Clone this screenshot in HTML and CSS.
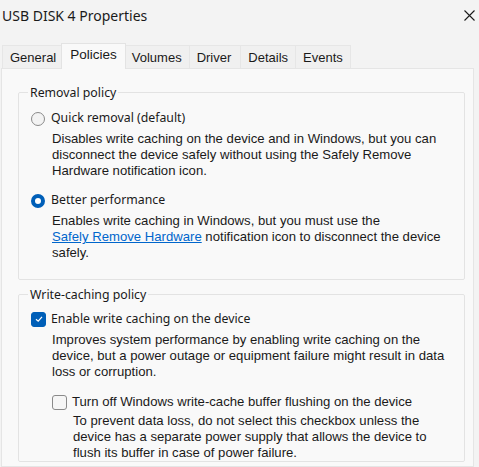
FILE: index.html
```html
<!DOCTYPE html>
<html>
<head>
<meta charset="utf-8">
<link rel="stylesheet" href="styles.css">
</head>
<body>
<div class="window">
  <div class="titlebar">
    <span class="title">USB DISK 4 Properties</span>
    <svg class="close" width="11" height="11" viewBox="0 0 11 11"><path d="M0.5 0.5 L10.5 10.5 M10.5 0.5 L0.5 10.5" stroke="#1a1a1a" stroke-width="1.1" fill="none"/></svg>
  </div>
  <div class="tabs">
    <div class="tab">General</div>
    <div class="tab active">Policies</div>
    <div class="tab">Volumes</div>
    <div class="tab tab-driver">Driver</div>
    <div class="tab">Details</div>
    <div class="tab">Events</div>
  </div>
  <div class="panel">
    <fieldset class="group group-removal">
      <legend>Removal policy</legend>
      <div class="opt">
        <span class="radio"></span>
        <span class="label">Quick removal (default)</span>
        <p class="desc">Disables write caching on the device and in Windows, but you can disconnect the device safely without using the Safely Remove Hardware notification icon.</p>
      </div>
      <div class="opt">
        <span class="radio checked"></span>
        <span class="label">Better performance</span>
        <p class="desc">Enables write caching in Windows, but you must use the<br><a class="link">Safely Remove Hardware</a> notification icon to disconnect the device safely.</p>
      </div>
    </fieldset>
    <fieldset class="group group-cache">
      <legend>Write-caching policy</legend>
      <div class="opt opt-check">
        <span class="check checked"><svg width="10" height="10" viewBox="0 0 10 10"><path d="M2 5.2 L4.2 7.2 L8 2.8" stroke="#fff" stroke-width="1.2" fill="none"/></svg></span>
        <span class="label">Enable write caching on the device</span>
        <p class="desc">Improves system performance by enabling write caching on the device, but a power outage or equipment failure might result in data loss or corruption.</p>
      </div>
      <div class="opt opt-check sub">
        <span class="check"></span>
        <span class="label plain">Turn off Windows write-cache buffer flushing on the device</span>
        <p class="desc">To prevent data loss, do not select this checkbox unless the device has a separate power supply that allows the device to flush its buffer in case of power failure.</p>
      </div>
    </fieldset>
  </div>
</div>
</body>
</html>
```
FILE: styles.css
```css
html, body {
  margin: 0;
  padding: 0;
}
body {
  width: 479px;
  height: 467px;
  overflow: hidden;
  background: #f3f3f3;
  font-family: "Liberation Sans", Arial, sans-serif;
  color: #1a1a1a;
}
.window {
  display: flex;
  flex-direction: column;
  height: 467px;
}
.titlebar {
  height: 32px;
  display: flex;
  align-items: center;
  justify-content: space-between;
  padding: 0 4px 0 2px;
}
.title {
  font-family: "Noto Sans", sans-serif;
  font-size: 14px;
  color: #1a1a1a;
  margin-top: -2px;
}
.close {
  margin-top: -2px;
}
.tabs {
  display: flex;
  align-items: flex-end;
  height: 25px;
  margin-top: 11px;
  padding-left: 2px;
}
.tab {
  height: 23px;
  box-sizing: border-box;
  padding: 0 7px;
  font-size: 13px;
  line-height: 23px;
  background: #f0f0f0;
  border: 1px solid #e6e6e6;
  border-bottom: none;
  color: #1a1a1a;
  margin-right: -1px;
}
.tab.tab-driver {
  padding: 0 9px 0 7px;
}
.tab.active {
  height: 26px;
  line-height: 22px;
  background: #f9f9f9;
  border-color: #e3e3e3;
  padding: 0 8px;
  margin: 0 0 -1px -2px;
  position: relative;
  z-index: 1;
  font-size: 13.5px;
}
.tab.active + .tab {
  margin-left: -2px;
}
.panel {
  flex: 1;
  background: #f9f9f9;
  border: 1px solid #e5e5e5;
  margin: 0 5px 0 1px;
  padding: 15px 8px 0 16px;
  display: flex;
  flex-direction: column;
  gap: 6px;
}
.group {
  margin: 0;
  border: 1px solid #e3e3e3;
  border-radius: 2px;
  padding: 7px 0 0 12px;
  min-width: 0;
}
.group legend {
  font-family: "Noto Sans", sans-serif;
  font-size: 12.3px;
  line-height: 16px;
  padding: 1px 2px 0 2px;
  margin-left: -3px;
  color: #1a1a1a;
}
.group-removal {
  padding-bottom: 18px;
}
.group-cache {
  padding-top: 6px;
}
.opt {
  display: grid;
  grid-template-columns: 14px 1fr;
  column-gap: 6px;
  align-items: center;
  margin-bottom: 11px;
}
.opt-check {
  grid-template-columns: 15px 1fr;
  column-gap: 5px;
  margin-bottom: 12px;
}
.opt:last-child {
  margin-bottom: 0;
}
.label {
  font-family: "Noto Sans", sans-serif;
  font-size: 12.3px;
  line-height: 20px;
}
.label.plain {
  font-family: "Liberation Sans", Arial, sans-serif;
  font-size: 13.15px;
}
.desc {
  grid-column: 2;
  margin: 3px 0 0 0;
  padding-left: 1px;
  font-size: 13.15px;
  line-height: 16px;
  padding-right: 16px;
}
.sub .desc {
  margin-top: 1px;
}
.link {
  color: #0066cc;
  text-decoration: underline;
}
.radio {
  width: 14px;
  height: 14px;
  box-sizing: border-box;
  border-radius: 50%;
  border: 1px solid #8a8a8a;
  background: #f3f3f3;
  margin-top: 2px;
}
.radio.checked {
  border: 4.5px solid #005fb8;
  background: #ffffff;
}
.check {
  width: 15px;
  height: 15px;
  box-sizing: border-box;
  border-radius: 3px;
  border: 1px solid #8a8a8a;
  background: #f6f6f6;
  display: flex;
  align-items: center;
  justify-content: center;
}
.check.checked {
  background: #005fb8;
  border-color: #005fb8;
}
.sub {
  margin-left: 21px;
}
```
